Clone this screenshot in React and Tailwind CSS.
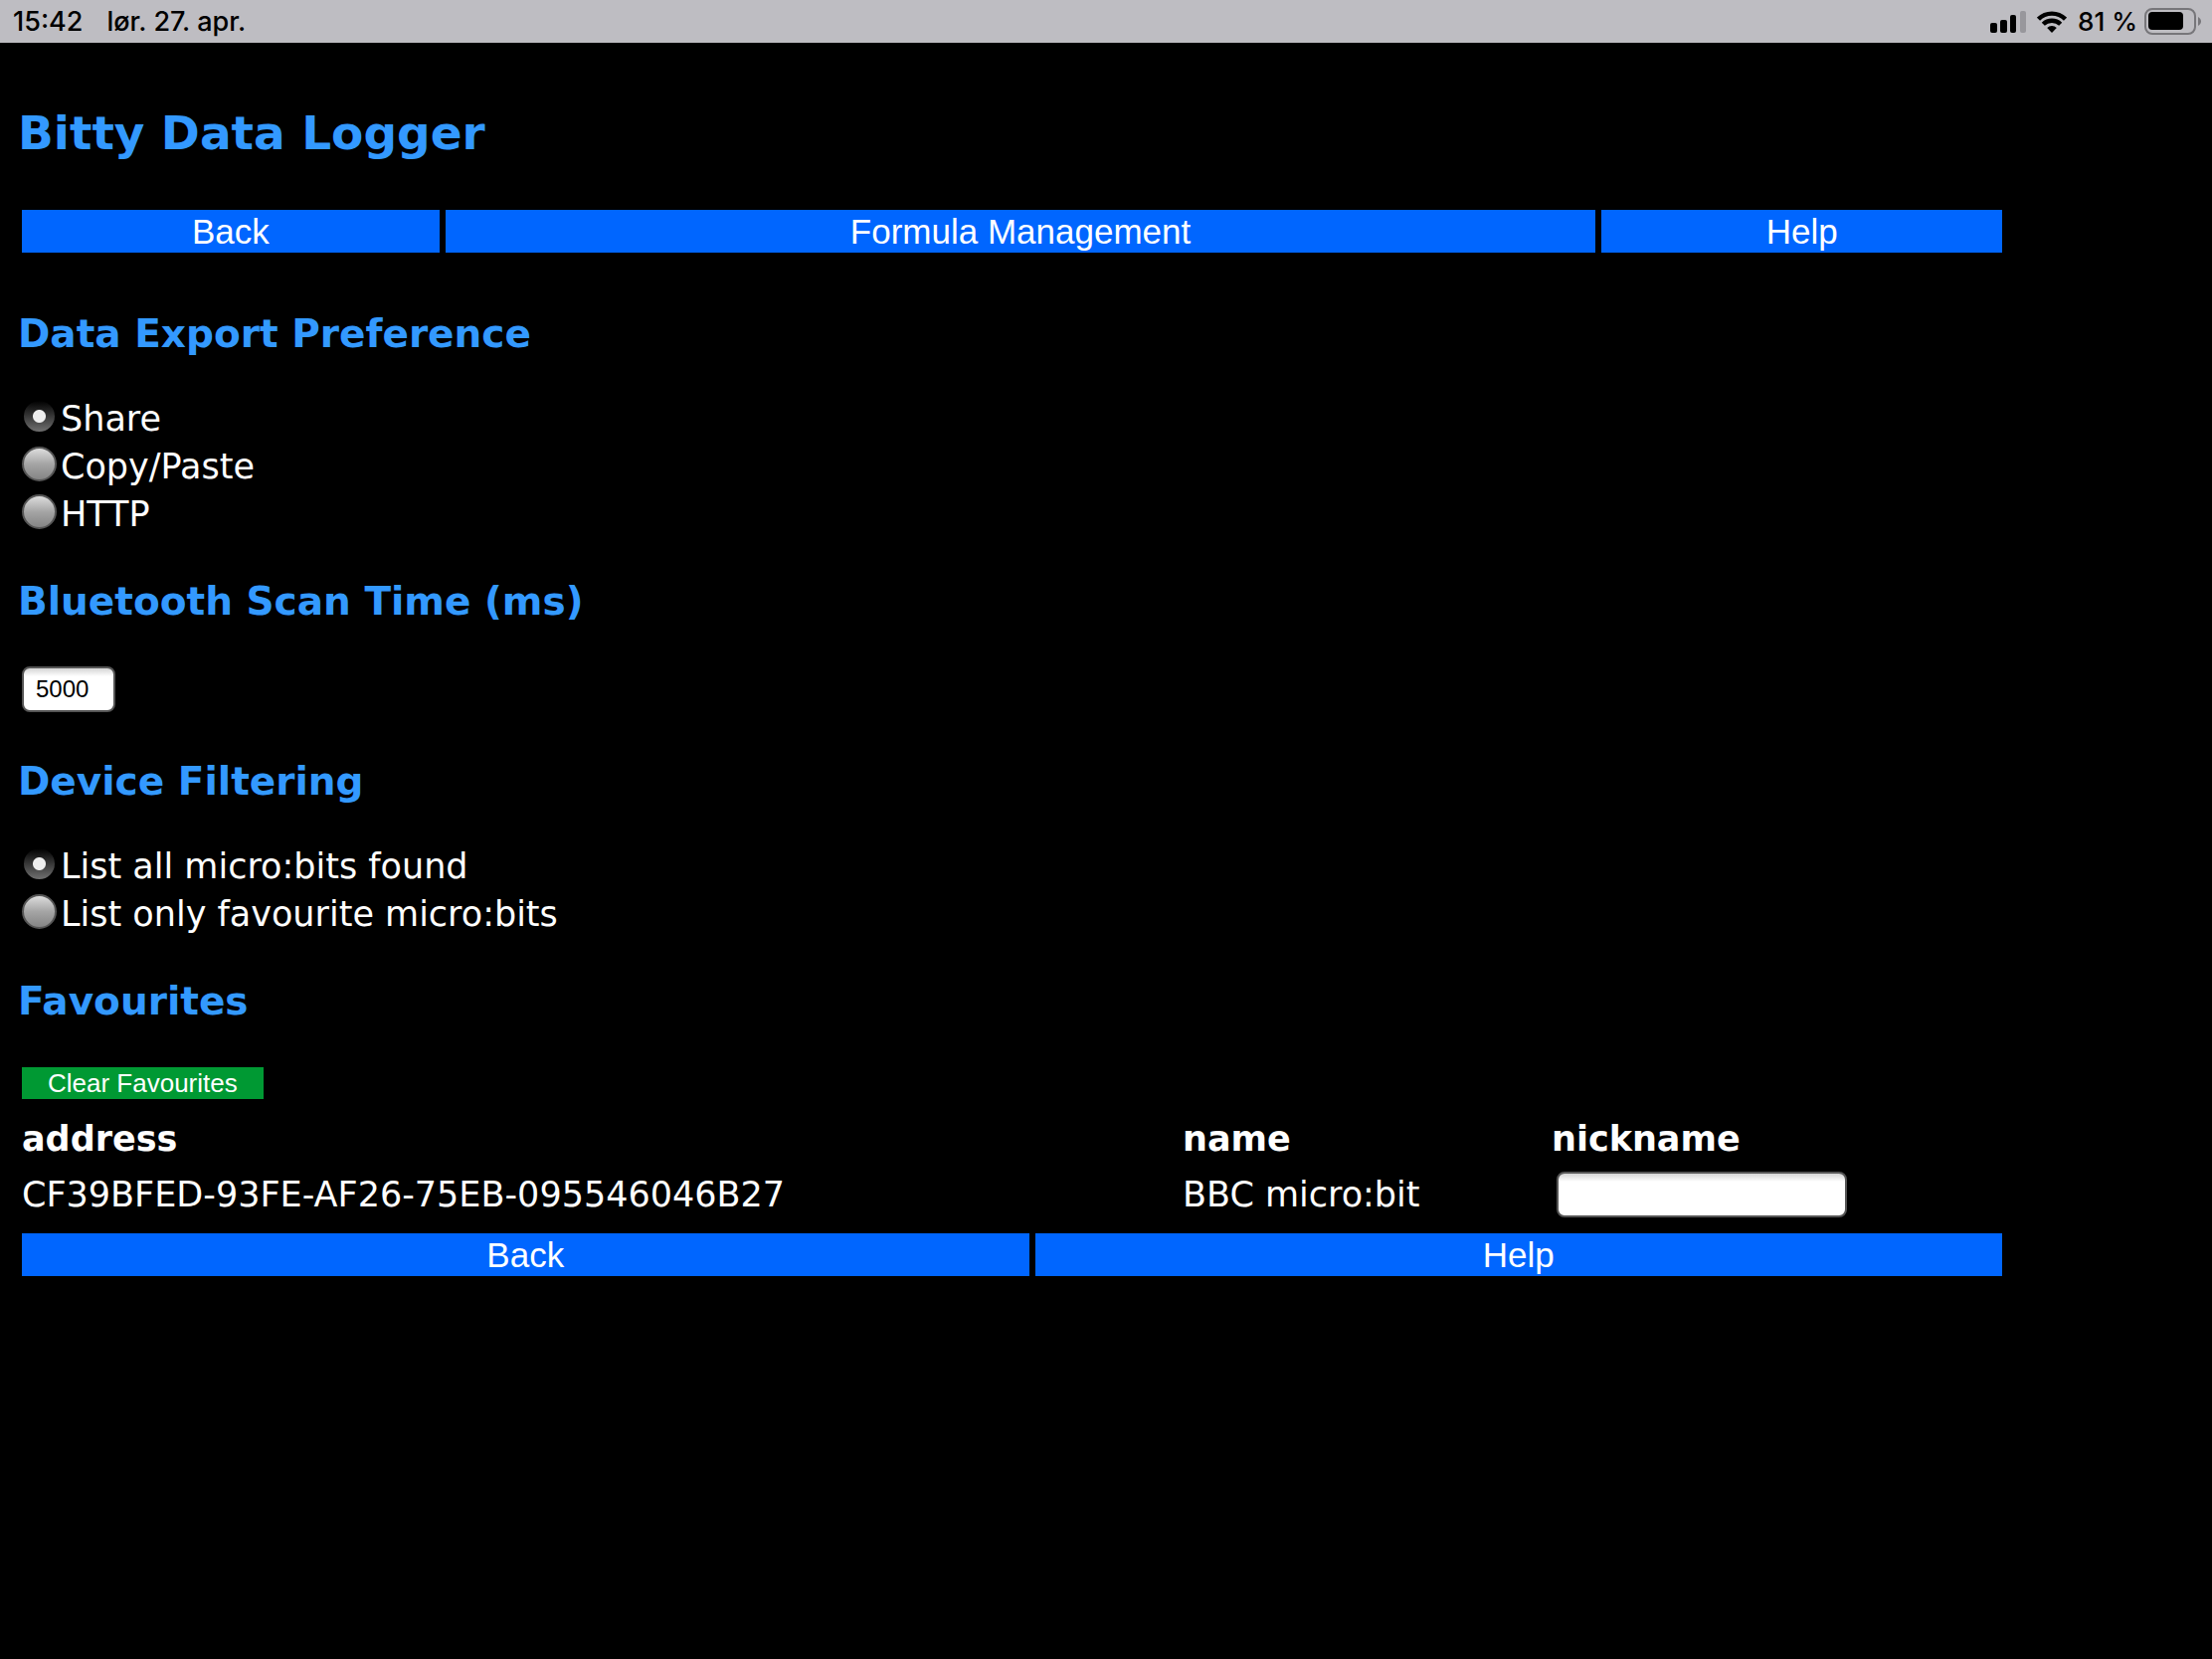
import React, { useState } from "react";

const StatusBar = () => (
  <header className="flex h-[43px] items-center justify-between bg-[#bebdc2] pl-[13px] pr-[10px] font-['Inter',sans-serif] text-[26px] leading-8 font-medium text-black">
    <div className="flex gap-6 text-[27px]">
      <span>15:42</span>
      <span>lør. 27. apr.</span>
    </div>
    <div className="flex items-center">
      <svg width="36" height="22" viewBox="0 0 36 22" className="mr-[11px]">
        <rect x="0" y="12" width="7" height="10" rx="2" />
        <rect x="10" y="9" width="7" height="13" rx="2" />
        <rect x="20" y="4" width="6" height="18" rx="2" />
        <rect x="30" y="0" width="6" height="22" rx="2" fill="#98979c" />
      </svg>
      <svg width="30" height="22" viewBox="0 0 30 22" className="mr-[11px]">
        <g fill="none" stroke="#000" strokeWidth="4.4">
          <path d="M1.5 8.2a19.2 19.2 0 0 1 27 0" />
          <path d="M6.3 13.3a12.4 12.4 0 0 1 17.4 0" />
        </g>
        <path d="M15 22l-4.8-4.9a6.8 6.8 0 0 1 9.6 0z" />
      </svg>
      <span className="mr-[7px]">81 %</span>
      <svg width="58" height="28" viewBox="0 0 58 28">
        <rect x="1" y="1" width="50" height="25" rx="7" fill="none" stroke="#77767a" strokeWidth="2" />
        <rect x="4" y="4" width="35" height="18" rx="4" />
        <path d="M54 9c4 2 4 7 0 9z" fill="#77767a" />
      </svg>
    </div>
  </header>
);

const SectionTitle = ({ id, children }) => (
  <h2 id={id} className="mt-10 mb-[37px] text-[39px] leading-[48px] font-bold text-[#3399ff]">
    {children}
  </h2>
);

const NavButton = ({ children }) => (
  <button
    type="button"
    className="h-[43px] bg-[#0066ff] font-['Liberation_Sans',sans-serif] text-[35px] leading-[43px] text-white"
  >
    {children}
  </button>
);

const RadioOption = ({ name, value, selected, onSelect, children }) => (
  <label className="flex h-12 items-center">
    <input
      type="radio"
      name={name}
      value={value}
      checked={selected === value}
      onChange={() => onSelect(value)}
      className="mr-1 mb-[5px] size-[35px] appearance-none rounded-full border-2 border-[#555555] bg-linear-to-b from-[#dddddd] via-[#a5a5a5] to-[#858585] checked:border-black checked:bg-[radial-gradient(circle,#eeeeee_6px,transparent_7px),linear-gradient(to_bottom,#000000,#707070)]"
    />
    {children}
  </label>
);

const inputClass =
  "h-[46px] rounded-lg border-2 border-[#555555] bg-white bg-[linear-gradient(to_bottom,#d4d4d4,#ffffff_8px)] px-3 font-['Liberation_Sans',sans-serif] text-2xl text-black";

const App = () => {
  const [exportPref, setExportPref] = useState("share");
  const [scanTime, setScanTime] = useState("5000");
  const [filter, setFilter] = useState("all");
  const [nickname, setNickname] = useState("");

  return (
    <div className="min-h-screen bg-black font-['DejaVu_Sans',sans-serif] text-[35px] leading-[48px] text-white">
      <StatusBar />
      <main className="px-[18px] pt-[61px] pb-10">
        <h1 className="mb-[47px] text-[47px] leading-[60px] font-bold text-[#3399ff]">
          Bitty Data Logger
        </h1>

        <nav className="mx-1 mb-[58px] grid w-[91%] grid-cols-[420fr_1157fr_403fr] gap-[6px]">
          <NavButton>Back</NavButton>
          <NavButton>Formula Management</NavButton>
          <NavButton>Help</NavButton>
        </nav>

        <SectionTitle id="export">Data Export Preference</SectionTitle>
        <div role="radiogroup" aria-labelledby="export" className="mx-1">
          <RadioOption name="export" value="share" selected={exportPref} onSelect={setExportPref}>
            Share
          </RadioOption>
          <RadioOption name="export" value="copy" selected={exportPref} onSelect={setExportPref}>
            Copy/Paste
          </RadioOption>
          <RadioOption name="export" value="http" selected={exportPref} onSelect={setExportPref}>
            HTTP
          </RadioOption>
        </div>

        <SectionTitle id="scan">Bluetooth Scan Time (ms)</SectionTitle>
        <div className="mx-1 flex pt-1 pb-[6px]">
          <input
            type="text"
            aria-labelledby="scan"
            value={scanTime}
            onChange={(e) => setScanTime(e.target.value)}
            className={`${inputClass} w-[94px]`}
          />
        </div>

        <SectionTitle id="filter">Device Filtering</SectionTitle>
        <div role="radiogroup" aria-labelledby="filter" className="mx-1">
          <RadioOption name="filter" value="all" selected={filter} onSelect={setFilter}>
            List all micro:bits found
          </RadioOption>
          <RadioOption name="filter" value="favourites" selected={filter} onSelect={setFilter}>
            List only favourite micro:bits
          </RadioOption>
        </div>

        <SectionTitle id="favourites">Favourites</SectionTitle>
        <div className="mx-1 w-[91%] pt-[5px]">
          <button
            type="button"
            className="mb-4 block h-8 bg-[#009933] px-[26px] font-['Liberation_Sans',sans-serif] text-[26px] leading-8 text-white"
          >
            Clear Favourites
          </button>
          <table aria-labelledby="favourites" className="mb-[7px] w-full table-fixed text-left">
            <thead>
              <tr className="h-12">
                <th className="w-[1167px] p-0">address</th>
                <th className="w-[371px] p-0">name</th>
                <th id="nickname" className="p-0">nickname</th>
              </tr>
            </thead>
            <tbody>
              <tr className="h-16">
                <td className="p-0">CF39BFED-93FE-AF26-75EB-095546046B27</td>
                <td className="p-0">BBC micro:bit</td>
                <td className="p-0">
                  <input
                    type="text"
                    aria-labelledby="nickname"
                    value={nickname}
                    onChange={(e) => setNickname(e.target.value)}
                    className={`${inputClass} mx-[5px] block w-[292px]`}
                  />
                </td>
              </tr>
            </tbody>
          </table>
        </div>

        <nav className="mx-1 grid w-[91%] grid-cols-[1013fr_973fr] gap-[6px]">
          <NavButton>Back</NavButton>
          <NavButton>Help</NavButton>
        </nav>
      </main>
    </div>
  );
};

export default App;
